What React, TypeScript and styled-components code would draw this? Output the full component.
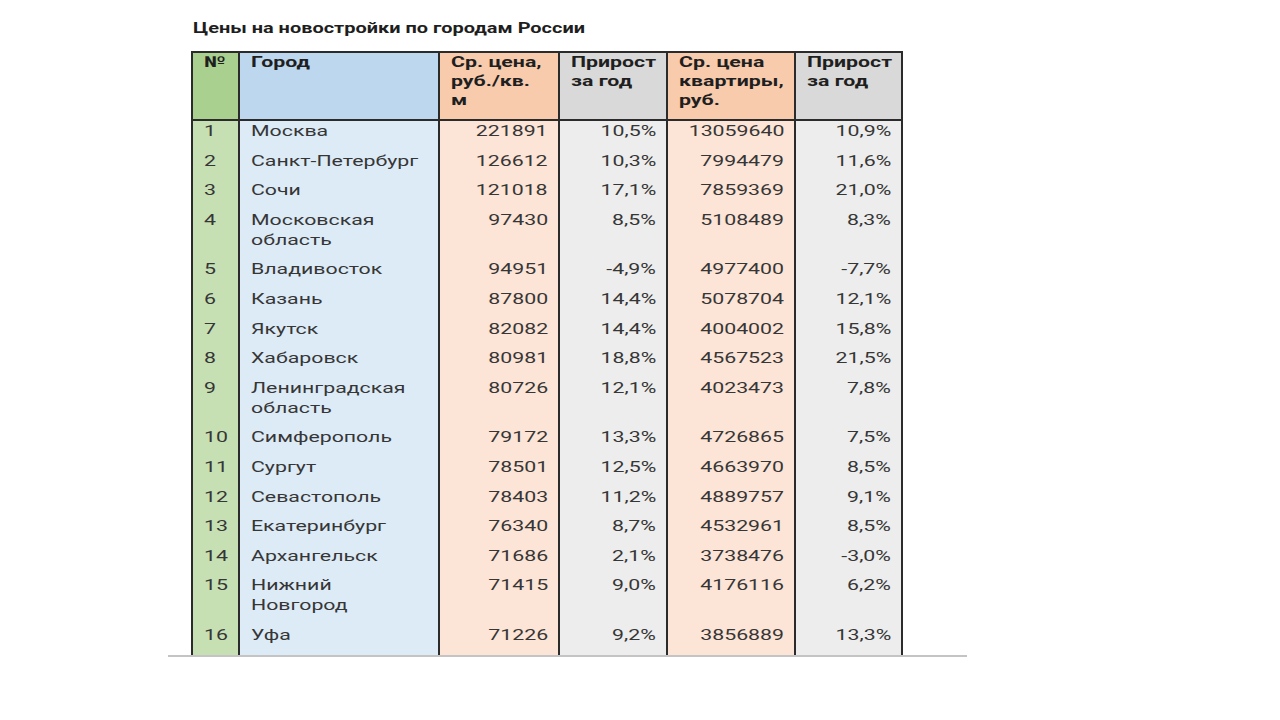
import React from "react";
import styled, { createGlobalStyle } from "styled-components";

const Global = createGlobalStyle`
  html, body { margin: 0; padding: 0; background: #ffffff; }
  body { font-family: Roboto, "Liberation Sans", sans-serif; }
`;

const SCALE = 1.42;

const Frame = styled.div`
  width: 799px;
  margin-left: 168px;
  border-bottom: 2px solid #c4c4c4;
`;

const Title = styled.h1`
  margin: 0;
  padding: 18px 0 0 25px;
  height: 51px;
  box-sizing: border-box;
  font-size: 15px;
  line-height: 20px;
  font-weight: 700;
  color: #1e1e1e;
`;

const Stretch = styled.span<{ $right?: boolean; $scale?: number }>`
  display: inline-block;
  white-space: pre-line;
  transform: scaleX(${(p) => p.$scale ?? SCALE});
  transform-origin: ${(p) => (p.$right ? "right" : "left")} center;
`;

const Table = styled.table`
  margin-left: 23px;
  width: 710px;
  table-layout: fixed;
  border-collapse: collapse;
  font-size: 15px;
`;

type Tone = "green" | "blue" | "orange" | "gray";

const headTone: Record<Tone, string> = {
  green: "#a9d08e",
  blue: "#bdd7ee",
  orange: "#f8cbad",
  gray: "#d9d9d9",
};

const bodyTone: Record<Tone, string> = {
  green: "#c6e0b4",
  blue: "#ddebf7",
  orange: "#fce4d6",
  gray: "#ededed",
};

const Head = styled.th<{ $tone: Tone }>`
  background: ${(p) => headTone[p.$tone]};
  border: 2px solid #2b2b2b;
  height: 66px;
  padding: 0 10px 0 11px;
  vertical-align: top;
  text-align: left;
  font-weight: 700;
  line-height: 19px;
  color: #1f1f1f;
`;

const Cell = styled.td<{ $tone: Tone; $right?: boolean }>`
  background: ${(p) => bodyTone[p.$tone]};
  border-left: 2px solid #2b2b2b;
  border-right: 2px solid #2b2b2b;
  padding: 0 10px 9.6px 11px;
  vertical-align: top;
  text-align: ${(p) => (p.$right ? "right" : "left")};
  line-height: 20px;
  color: #363636;
`;

const widths = [47, 200, 120, 108, 128, 107];

const heads: { text: string; tone: Tone }[] = [
  { text: "№", tone: "green" },
  { text: "Город", tone: "blue" },
  { text: "Ср. цена,\nруб./кв.\nм", tone: "orange" },
  { text: "Прирост\nза год", tone: "gray" },
  { text: "Ср. цена\nквартиры,\nруб.", tone: "orange" },
  { text: "Прирост\nза год", tone: "gray" },
];

const rows: [string, string, string, string, string][] = [
  ["Москва", "221891", "10,5%", "13059640", "10,9%"],
  ["Санкт-Петербург", "126612", "10,3%", "7994479", "11,6%"],
  ["Сочи", "121018", "17,1%", "7859369", "21,0%"],
  ["Московская\nобласть", "97430", "8,5%", "5108489", "8,3%"],
  ["Владивосток", "94951", "-4,9%", "4977400", "-7,7%"],
  ["Казань", "87800", "14,4%", "5078704", "12,1%"],
  ["Якутск", "82082", "14,4%", "4004002", "15,8%"],
  ["Хабаровск", "80981", "18,8%", "4567523", "21,5%"],
  ["Ленинградская\nобласть", "80726", "12,1%", "4023473", "7,8%"],
  ["Симферополь", "79172", "13,3%", "4726865", "7,5%"],
  ["Сургут", "78501", "12,5%", "4663970", "8,5%"],
  ["Севастополь", "78403", "11,2%", "4889757", "9,1%"],
  ["Екатеринбург", "76340", "8,7%", "4532961", "8,5%"],
  ["Архангельск", "71686", "2,1%", "3738476", "-3,0%"],
  ["Нижний\nНовгород", "71415", "9,0%", "4176116", "6,2%"],
  ["Уфа", "71226", "9,2%", "3856889", "13,3%"],
];

export default function App() {
  return (
    <>
      <Global />
      <Frame>
        <Title>
          <Stretch $scale={1.33}>Цены на новостройки по городам России</Stretch>
        </Title>
        <Table>
          <colgroup>
            {widths.map((w, i) => (
              <col key={i} style={{ width: w }} />
            ))}
          </colgroup>
          <thead>
            <tr>
              {heads.map((h, i) => (
                <Head key={i} $tone={h.tone}>
                  <Stretch>{h.text}</Stretch>
                </Head>
              ))}
            </tr>
          </thead>
          <tbody>
            {rows.map((r, i) => (
              <tr key={i}>
                <Cell $tone="green">
                  <Stretch>{i + 1}</Stretch>
                </Cell>
                <Cell $tone="blue">
                  <Stretch>{r[0]}</Stretch>
                </Cell>
                <Cell $tone="orange" $right>
                  <Stretch $right>{r[1]}</Stretch>
                </Cell>
                <Cell $tone="gray" $right>
                  <Stretch $right>{r[2]}</Stretch>
                </Cell>
                <Cell $tone="orange" $right>
                  <Stretch $right>{r[3]}</Stretch>
                </Cell>
                <Cell $tone="gray" $right>
                  <Stretch $right>{r[4]}</Stretch>
                </Cell>
              </tr>
            ))}
          </tbody>
        </Table>
      </Frame>
    </>
  );
}
